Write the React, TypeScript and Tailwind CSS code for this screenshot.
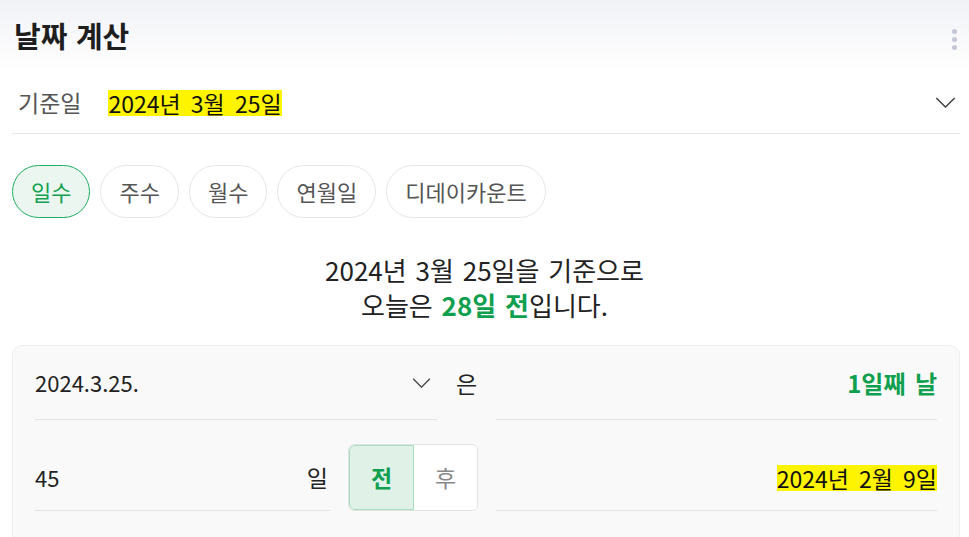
const font = { fontFamily: '"Noto Sans CJK KR", "Noto Sans", sans-serif' };

const Chevron = ({ className }: { className?: string }) => (
  <svg className={className} viewBox="0 0 22 12" fill="none" stroke="#444" strokeWidth="1.6">
    <path d="M1 1l10 10 10-10" />
  </svg>
);

const tabs = ["일수", "주수", "월수", "연월일", "디데이카운트"];

export default function App() {
  return (
    <div className="w-[969px] h-[537px] overflow-hidden bg-white text-[#222]" style={font}>
      <div className="h-[72px] bg-gradient-to-b from-[#f1f2f6] to-white flex items-center justify-between pl-[14px] pr-[12px]">
        <h1 className="text-[29px] font-bold text-[#1e1e1e] [word-spacing:2px]">날짜 계산</h1>
        <div className="flex flex-col gap-[3px] pt-[6px]">
          <span className="w-[5px] h-[5px] rounded-full bg-[#c3c7d6]" />
          <span className="w-[5px] h-[5px] rounded-full bg-[#c3c7d6]" />
          <span className="w-[5px] h-[5px] rounded-full bg-[#c3c7d6]" />
        </div>
      </div>

      <div className="ml-[12px] mr-[9px] h-[62px] border-b border-[#e6e6e6] flex items-center pl-[6px] pr-[4px]">
        <span className="text-[23px] text-[#555]">기준일</span>
        <span className="ml-[27px] text-[23px] leading-[26px] bg-[#fff400] text-[#111] [word-spacing:5px]">
          2024년 3월 25일
        </span>
        <Chevron className="ml-auto w-[21px] h-[11px]" />
      </div>

      <div className="mt-[31px] px-[12px] flex gap-[10px]">
        {tabs.map((t, i) => (
          <div
            key={t}
            className={
              i === 0
                ? "h-[53px] px-[18px] rounded-full border border-[#1fae62] bg-[#eaf6ef] text-[#12a150] text-[22px] flex items-center"
                : "h-[53px] px-[18px] rounded-full border border-[#e6e6e6] bg-white text-[#555] text-[22px] flex items-center"
            }
          >
            {t}
          </div>
        ))}
      </div>

      <div className="mt-[34px] text-center text-[26px] leading-[35px] text-[#222] [word-spacing:3px]">
        <p>2024년 3월 25일을 기준으로</p>
        <p>
          오늘은 <span className="font-bold text-[#0fa04f]">28일 전</span>입니다.
        </p>
      </div>

      <div className="mt-[23px] ml-[12px] mr-[9px] h-[200px] rounded-[10px] border border-[#efefef] bg-[#f9f9f9] pl-[22px] pr-[22px]">
        <div className="flex h-[74px]">
          <div className="w-[402px] border-b border-[#e4e4e4] flex items-center justify-between pr-[6px]">
            <span className="text-[22px]">2024.3.25.</span>
            <Chevron className="w-[19px] h-[10px]" />
          </div>
          <div className="w-[59px] flex items-center justify-center text-[23px]">은</div>
          <div className="flex-1 border-b border-[#e4e4e4] flex items-center justify-end text-[24px] font-bold text-[#0fa04f] [word-spacing:4px]">
            1일째 날
          </div>
        </div>
        <div className="flex h-[91px] items-end">
          <div className="w-[295px] h-[66px] border-b border-[#e4e4e4] flex items-center justify-between pr-[2px] text-[22px]">
            <span>45</span>
            <span className="text-[23px]">일</span>
          </div>
          <div className="ml-[18px] w-[130px] h-[67px] flex rounded-[6px] border border-[#e2e2e2] overflow-hidden text-[23px]">
            <div className="w-[65px] flex items-center justify-center bg-[#e0f2e8] border border-[#a9dcbf] rounded-l-[6px] font-bold text-[#0fa04f]">
              전
            </div>
            <div className="flex-1 flex items-center justify-center bg-white text-[#888]">후</div>
          </div>
          <div className="ml-[18px] flex-1 h-[66px] border-b border-[#e4e4e4] flex items-center justify-end text-[23px]">
            <span className="leading-[26px] bg-[#fff400] text-[#111] [word-spacing:5px]">2024년 2월 9일</span>
          </div>
        </div>
      </div>
    </div>
  );
}
